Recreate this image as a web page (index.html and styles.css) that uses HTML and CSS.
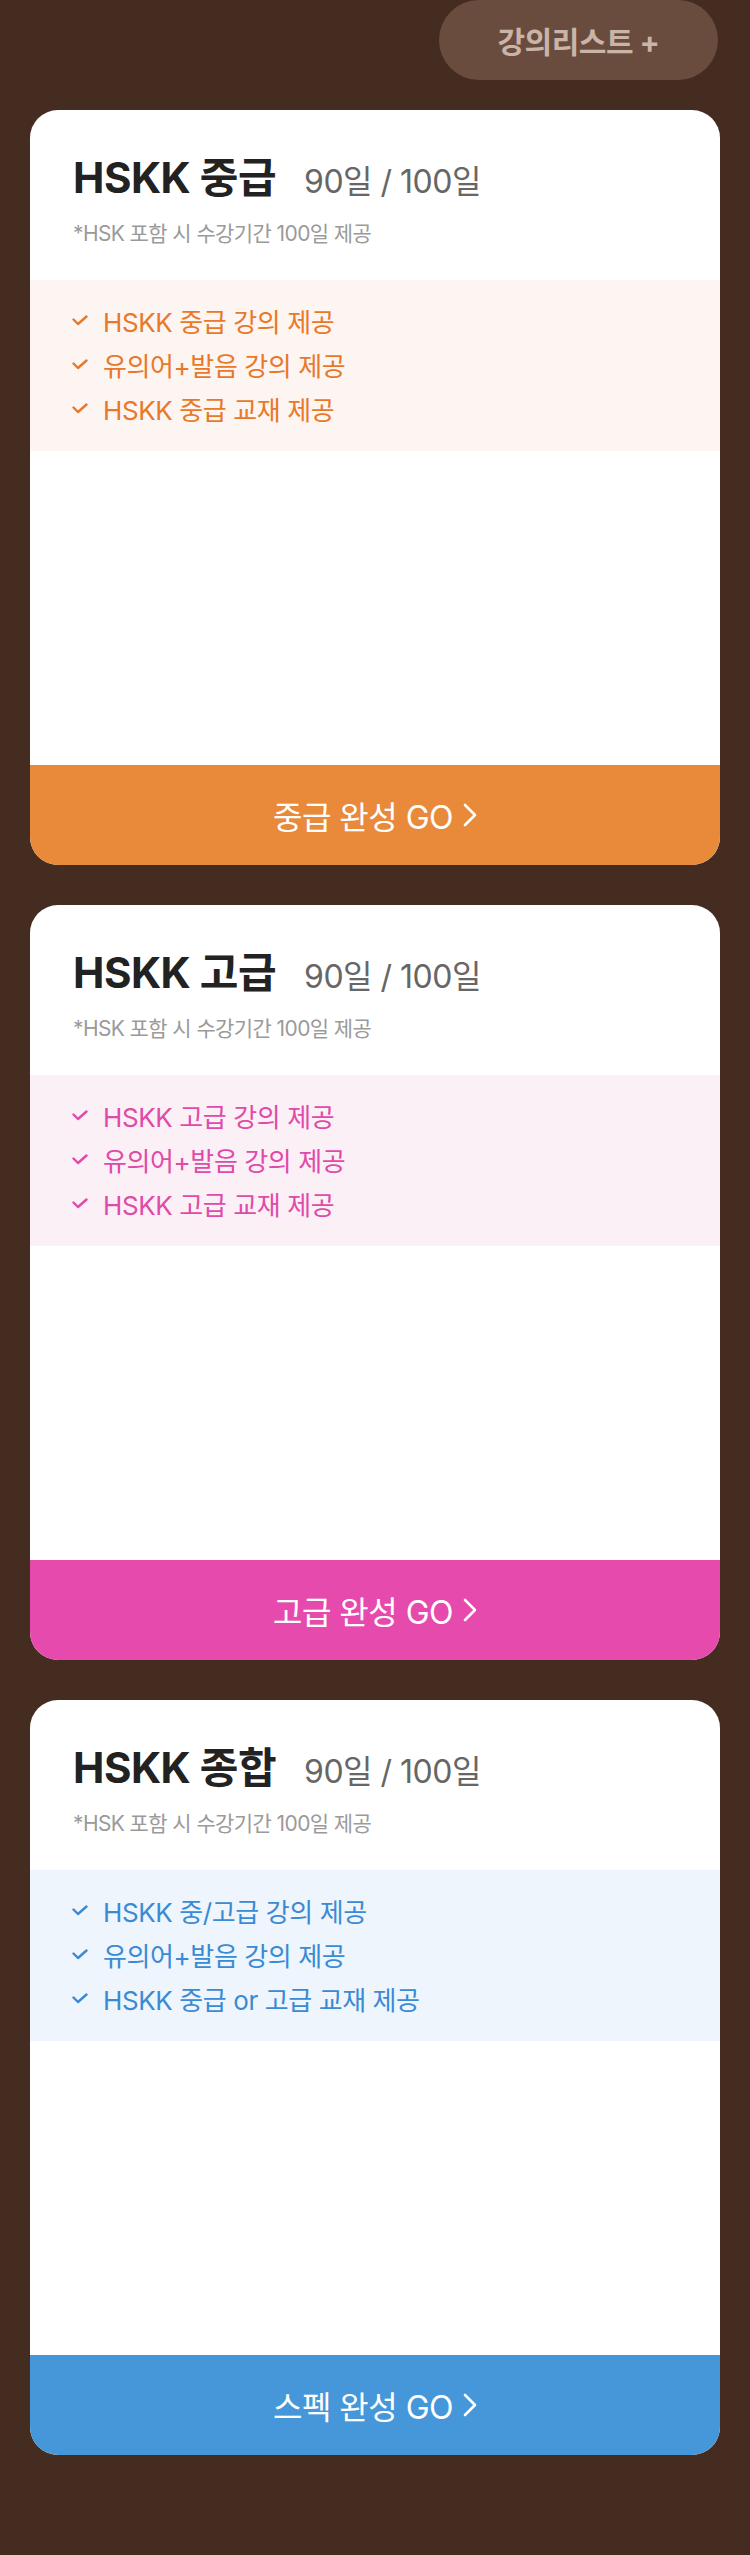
FILE: index.html
```html
<!DOCTYPE html>
<html lang="ko">
<head>
<meta charset="utf-8">
<title>HSKK 강의</title>
<link rel="stylesheet" href="styles.css">
</head>
<body>
<div class="page">
  <div class="topbar">
    <button class="list-btn">강의리스트 +</button>
  </div>

  <section class="card card-orange">
    <div class="head">
      <h2 class="title">HSKK 중급<span class="period">90일 / 100일</span></h2>
      <p class="note">*HSK 포함 시 수강기간 100일 제공</p>
    </div>
    <ul class="features">
      <li><svg class="check" viewBox="0 0 16 11"><path d="M1.5 4.5 L6 9 L14.5 1.5"/></svg>HSKK 중급 강의 제공</li>
      <li><svg class="check" viewBox="0 0 16 11"><path d="M1.5 4.5 L6 9 L14.5 1.5"/></svg>유의어+발음 강의 제공</li>
      <li><svg class="check" viewBox="0 0 16 11"><path d="M1.5 4.5 L6 9 L14.5 1.5"/></svg>HSKK 중급 교재 제공</li>
    </ul>
    <a class="cta">중급 완성 GO<svg class="chev" viewBox="0 0 14 24"><path d="M2 2 L12 12 L2 22"/></svg></a>
  </section>

  <section class="card card-pink">
    <div class="head">
      <h2 class="title">HSKK 고급<span class="period">90일 / 100일</span></h2>
      <p class="note">*HSK 포함 시 수강기간 100일 제공</p>
    </div>
    <ul class="features">
      <li><svg class="check" viewBox="0 0 16 11"><path d="M1.5 4.5 L6 9 L14.5 1.5"/></svg>HSKK 고급 강의 제공</li>
      <li><svg class="check" viewBox="0 0 16 11"><path d="M1.5 4.5 L6 9 L14.5 1.5"/></svg>유의어+발음 강의 제공</li>
      <li><svg class="check" viewBox="0 0 16 11"><path d="M1.5 4.5 L6 9 L14.5 1.5"/></svg>HSKK 고급 교재 제공</li>
    </ul>
    <a class="cta">고급 완성 GO<svg class="chev" viewBox="0 0 14 24"><path d="M2 2 L12 12 L2 22"/></svg></a>
  </section>

  <section class="card card-blue">
    <div class="head">
      <h2 class="title">HSKK 종합<span class="period">90일 / 100일</span></h2>
      <p class="note">*HSK 포함 시 수강기간 100일 제공</p>
    </div>
    <ul class="features">
      <li><svg class="check" viewBox="0 0 16 11"><path d="M1.5 4.5 L6 9 L14.5 1.5"/></svg>HSKK 중/고급 강의 제공</li>
      <li><svg class="check" viewBox="0 0 16 11"><path d="M1.5 4.5 L6 9 L14.5 1.5"/></svg>유의어+발음 강의 제공</li>
      <li><svg class="check" viewBox="0 0 16 11"><path d="M1.5 4.5 L6 9 L14.5 1.5"/></svg>HSKK 중급 or 고급 교재 제공</li>
    </ul>
    <a class="cta">스펙 완성 GO<svg class="chev" viewBox="0 0 14 24"><path d="M2 2 L12 12 L2 22"/></svg></a>
  </section>
</div>
</body>
</html>
```

FILE: styles.css
```css
html, body {
  margin: 0;
  padding: 0;
  background: #452c21;
}

body {
  font-family: "Inter", "Noto Sans CJK KR", sans-serif;
  width: 750px;
}

.page {
  padding: 0 30px 100px;
  display: flex;
  flex-direction: column;
  gap: 40px;
}

.topbar {
  display: flex;
  justify-content: flex-end;
  padding-right: 2px;
  margin-bottom: -10px;
}

.list-btn {
  width: 279px;
  height: 80px;
  border: 0;
  border-radius: 40px;
  background: #6a4c3f;
  color: #c9b4a7;
  font-family: "Inter", "Noto Sans CJK KR", sans-serif;
  font-size: 30px;
  font-weight: 700;
  letter-spacing: -0.5px;
  padding: 0;
}

.card {
  height: 755px;
  background: #ffffff;
  border-radius: 28px;
  overflow: hidden;
  display: flex;
  flex-direction: column;
}

.head {
  padding: 43px 0 0 43px;
}

.title {
  margin: 0;
  font-size: 42px;
  line-height: 50px;
  font-weight: 700;
  color: #222222;
  letter-spacing: -0.5px;
}

.period {
  margin-left: 28px;
  font-size: 32px;
  font-weight: 400;
  color: #666666;
  letter-spacing: -0.5px;
}

.note {
  margin: 12px 0 0;
  font-size: 21px;
  line-height: 30px;
  color: #9a9a9a;
  letter-spacing: -0.6px;
}

.features {
  list-style: none;
  margin: 31px 0 0;
  padding: 18px 0 21px 42px;
}

.features li {
  display: flex;
  align-items: center;
  height: 44px;
  font-size: 26px;
  letter-spacing: -0.4px;
}

.check {
  width: 16px;
  height: 11px;
  margin-right: 15px;
  flex: none;
}

.check path {
  fill: none;
  stroke: currentColor;
  stroke-width: 2.4;
  stroke-linecap: round;
  stroke-linejoin: round;
}

.cta {
  margin-top: auto;
  height: 100px;
  display: flex;
  align-items: center;
  justify-content: center;
  color: #ffffff;
  font-size: 32px;
  letter-spacing: -0.5px;
  text-decoration: none;
}

.chev {
  width: 14px;
  height: 24px;
  margin-left: 10px;
}

.chev path {
  fill: none;
  stroke: #ffffff;
  stroke-width: 2.6;
  stroke-linecap: round;
  stroke-linejoin: round;
}

.card-orange .features { background: #fdf5f1; color: #e8782a; }
.card-orange .cta { background: #e98a3a; }

.card-pink .features { background: #fcf0f7; color: #e04aa8; }
.card-pink .cta { background: #e64aad; }

.card-blue .features { background: #eef5fd; color: #3b8ad4; }
.card-blue .cta { background: #4597da; }
```
